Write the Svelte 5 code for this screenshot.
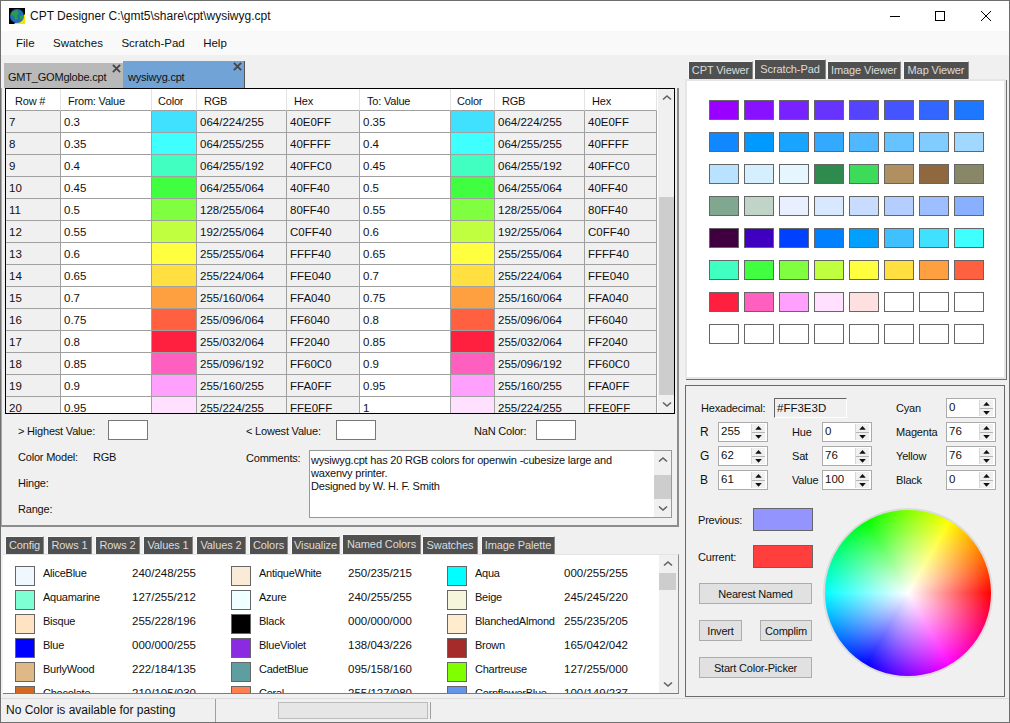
<script lang="ts">
  const rows = [
    [7, '0.3', '#40E0FF', '064/224/255', '40E0FF', '0.35'],
    [8, '0.35', '#40FFFF', '064/255/255', '40FFFF', '0.4'],
    [9, '0.4', '#40FFC0', '064/255/192', '40FFC0', '0.45'],
    [10, '0.45', '#40FF40', '064/255/064', '40FF40', '0.5'],
    [11, '0.5', '#80FF40', '128/255/064', '80FF40', '0.55'],
    [12, '0.55', '#C0FF40', '192/255/064', 'C0FF40', '0.6'],
    [13, '0.6', '#FFFF40', '255/255/064', 'FFFF40', '0.65'],
    [14, '0.65', '#FFE040', '255/224/064', 'FFE040', '0.7'],
    [15, '0.7', '#FFA040', '255/160/064', 'FFA040', '0.75'],
    [16, '0.75', '#FF6040', '255/096/064', 'FF6040', '0.8'],
    [17, '0.8', '#FF2040', '255/032/064', 'FF2040', '0.85'],
    [18, '0.85', '#FF60C0', '255/096/192', 'FF60C0', '0.9'],
    [19, '0.9', '#FFA0FF', '255/160/255', 'FFA0FF', '0.95'],
    [20, '0.95', '#FFE0FF', '255/224/255', 'FFE0FF', '1']
  ];

  const swatches = [
    '#9900FF', '#8811FF', '#7722FF', '#6633FF', '#5544FF', '#4455FF', '#3366FF', '#1E78FF',
    '#1188FF', '#0099FF', '#18A4FF', '#33AAFF', '#4FB8FF', '#66C3FF', '#80CCFF', '#A0D8FF',
    '#B8E2FF', '#D6EFFF', '#E6F6FF', '#2E8B4D', '#3CDC5A', '#B09060', '#906840', '#888868',
    '#80A890', '#C0D4C8', '#E8F0FF', '#D8E8FF', '#C8DCFF', '#B4CFFF', '#9EBFFF', '#88B0FF',
    '#400040', '#4000C0', '#0040FF', '#0080FF', '#00A0FF', '#40C0FF', '#40E0FF', '#40FFFF',
    '#40FFC0', '#40FF40', '#80FF40', '#C0FF40', '#FFFF40', '#FFE040', '#FFA040', '#FF6040',
    '#FF2040', '#FF60C0', '#FFA0FF', '#FFE0FF', '#FFE0E0', '#FFF', '#FFF', '#FFF',
    '#FFF', '#FFF', '#FFF', '#FFF', '#FFF', '#FFF', '#FFF', '#FFF'
  ];

  const named = [
    ['AliceBlue', '240/248/255', '#F0F8FF'], ['AntiqueWhite', '250/235/215', '#FAEBD7'], ['Aqua', '000/255/255', '#00FFFF'],
    ['Aquamarine', '127/255/212', '#7FFFD4'], ['Azure', '240/255/255', '#F0FFFF'], ['Beige', '245/245/220', '#F5F5DC'],
    ['Bisque', '255/228/196', '#FFE4C4'], ['Black', '000/000/000', '#000000'], ['BlanchedAlmond', '255/235/205', '#FFEBCD'],
    ['Blue', '000/000/255', '#0000FF'], ['BlueViolet', '138/043/226', '#8A2BE2'], ['Brown', '165/042/042', '#A52A2A'],
    ['BurlyWood', '222/184/135', '#DEB887'], ['CadetBlue', '095/158/160', '#5F9EA0'], ['Chartreuse', '127/255/000', '#7FFF00'],
    ['Chocolate', '210/105/030', '#D2691E'], ['Coral', '255/127/080', '#FF7F50'], ['CornflowerBlue', '100/149/237', '#6495ED']
  ];

  const lowerTabs = [
    ['Config', 39], ['Rows 1', 45], ['Rows 2', 45], ['Values 1', 50], ['Values 2', 50],
    ['Colors', 39], ['Visualize', 49], ['Named Colors', 79], ['Swatches', 56], ['Image Palette', 74]
  ];
  const viewerTabs = [['CPT Viewer', 65], ['Scratch-Pad', 72], ['Image Viewer', 74], ['Map Viewer', 66]];
</script>

{#snippet scrollbar(kind: string)}
  <div class="scrollbar {kind}">
    <svg class="chev" viewBox="0 0 10 6"><path d="M1 5 5 1.500 9 5" /></svg>
    <div class="track"><div class="thumb"></div></div>
    <svg class="chev" viewBox="0 0 10 6"><path d="M1 1 5 4.500 9 1" /></svg>
  </div>
{/snippet}

{#snippet spin(value: string)}
  <div class="spin">
    <span>{value}</span>
    <div class="spin-btns">
      <svg viewBox="0 0 13 8"><path d="M6.500 2 10 6H3z" /></svg>
      <svg viewBox="0 0 13 8"><path d="M6.500 6 10 2H3z" /></svg>
    </div>
  </div>
{/snippet}

{#snippet closeX()}
  <svg class="close-x" viewBox="0 0 10 10"><path d="M1 1 9 9M9 1 1 9" /></svg>
{/snippet}

<div class="window">
  <header class="titlebar">
    <svg class="app-icon" viewBox="0 0 16 16">
      <rect width="16" height="16" fill="#000" />
      <path d="M16 6V16H5z" fill="#f2e40c" />
      <circle cx="8" cy="8" r="7" fill="#1c6fb8" />
      <path d="M3 4 8 2l2 3-2 3 1 3-3 1-1-4-3-1zM11 8l3-1 0 3-3 2z" fill="#2f9a48" />
    </svg>
    <span class="title">CPT Designer C:\gmt5\share\cpt\wysiwyg.cpt</span>
    <div class="win-controls">
      <svg viewBox="0 0 10 10"><path d="M0 5.500H10" /></svg>
      <svg viewBox="0 0 10 10"><rect x=".5" y=".5" width="9" height="9" /></svg>
      <svg viewBox="0 0 10 10"><path d="M0 0 10 10M10 0 0 10" /></svg>
    </div>
  </header>

  <nav class="menubar">
    <span>File</span><span>Swatches</span><span>Scratch-Pad</span><span>Help</span>
  </nav>

  <main class="main">
    <section class="left">
      <div class="upper">
        <div class="doc-tabs">
          <div class="doc-tab inactive"><span>GMT_GOMglobe.cpt</span>{@render closeX()}</div>
          <div class="doc-tab active"><span>wysiwyg.cpt</span>{@render closeX()}</div>
        </div>

        <div class="upper-body">
          <div class="table-box">
            <div class="table">
              <div class="row head">
                <div>Row #</div><div>From: Value</div><div class="color-head">Color</div><div>RGB</div><div>Hex</div>
                <div>To: Value</div><div class="color-head">Color</div><div>RGB</div><div>Hex</div>
              </div>
              {#each rows as r}
                <div class="row">
                  <div class="grey">{r[0]}</div>
                  <div>{r[1]}</div>
                  <div style="background: {r[2]}"></div>
                  <div class="grey">{r[3]}</div>
                  <div class="grey">{r[4]}</div>
                  <div>{r[5]}</div>
                  <div style="background: {r[2]}"></div>
                  <div class="grey">{r[3]}</div>
                  <div class="grey">{r[4]}</div>
                </div>
              {/each}
            </div>
            {@render scrollbar('sb-table')}
          </div>

          <div class="limits">
            <span class="l-high">&gt; Highest Value:</span><div class="color-box"></div>
            <span class="l-low">&lt; Lowest Value:</span><div class="color-box"></div>
            <span class="l-nan">NaN Color:</span><div class="color-box"></div>
          </div>

          <div class="meta">
            <div class="meta-left">
              <div><span class="meta-label">Color Model:</span><span>RGB</span></div>
              <div>Hinge:</div>
              <div>Range:</div>
            </div>
            <span class="comments-label">Comments:</span>
            <div class="comments">
              <p>wysiwyg.cpt has 20 RGB colors for openwin -cubesize large and waxenvy printer.<br />Designed by W. H. F. Smith</p>
              {@render scrollbar('sb-comments')}
            </div>
          </div>
        </div>
      </div>

      <div class="lower">
        <div class="tabs lower-tabs">
          {#each lowerTabs as [t, w]}
            <div class="tab" class:selected={t === 'Named Colors'} style="width: {w}px">{t}</div>
          {/each}
        </div>
        <div class="named-box">
          <div class="named">
            {#each named as n}
              <div class="named-item">
                <div class="named-chip" style="background: {n[2]}"></div>
                <span class="named-name">{n[0]}</span>
                <span class="num">{n[1]}</span>
              </div>
            {/each}
          </div>
          {@render scrollbar('sb-named')}
        </div>
      </div>
    </section>

    <section class="right">
      <div class="tabs viewer-tabs">
        {#each viewerTabs as [t, w]}
          <div class="tab" class:selected={t === 'Scratch-Pad'} style="width: {w}px">{t}</div>
        {/each}
      </div>
      <div class="viewer">
        <div class="swatch-grid">
          {#each swatches as c}
            <div class="swatch" style="background: {c}"></div>
          {/each}
        </div>
      </div>

      <div class="picker">
        <div class="values">
          <div class="hex-row">
            <span>Hexadecimal:</span>
            <div class="hex-input">#FF3E3D</div>
          </div>
          <span>Cyan</span>{@render spin('0')}
          <span class="ch">R</span>{@render spin('255')}<i></i><span>Hue</span>{@render spin('0')}<i></i><span>Magenta</span>{@render spin('76')}
          <span class="ch">G</span>{@render spin('62')}<i></i><span>Sat</span>{@render spin('76')}<i></i><span>Yellow</span>{@render spin('76')}
          <span class="ch">B</span>{@render spin('61')}<i></i><span>Value</span>{@render spin('100')}<i></i><span>Black</span>{@render spin('0')}
        </div>

        <div class="picker-bottom">
          <div class="actions">
            <div class="compare"><span>Previous:</span><div class="chip previous"></div></div>
            <div class="compare current"><span>Current:</span><div class="chip now"></div></div>
            <button>Nearest Named</button>
            <div class="btn-pair"><button class="invert">Invert</button><button class="complim">Complim</button></div>
            <button>Start Color-Picker</button>
          </div>
          <div class="wheel"><div class="wheel-fade"></div></div>
        </div>
      </div>
    </section>
  </main>

  <footer class="statusbar">
    <span class="status-text">No Color is available for pasting</span>
    <div class="progress"></div>
  </footer>
</div>

<style>
  :global(body) {
    margin: 0;
    background: #f0f0f0;
  }

  .window {
    width: 1010px;
    height: 723px;
    box-sizing: border-box;
    border: 1px solid #6f6f6f;
    background: #f0f0f0;
    display: flex;
    flex-direction: column;
    overflow: hidden;
    font-family: "Liberation Sans", Arial, sans-serif;
    font-size: 11px;
    letter-spacing: -0.2px;
    color: #111;
  }

  .titlebar {
    height: 30px;
    flex: none;
    background: #fff;
    display: flex;
    align-items: center;
    padding-left: 8px;
    letter-spacing: 0;
  }

  .app-icon {
    width: 16px;
    height: 16px;
    margin-right: 5px;
  }

  .title {
    font-size: 12px;
  }

  .win-controls {
    margin-left: auto;
    margin-right: 18px;
    display: flex;
    gap: 36px;
  }

  .win-controls svg {
    width: 10px;
    height: 10px;
    fill: none;
    stroke: #000;
    stroke-width: 1;
    overflow: visible;
  }

  .win-controls svg:first-child {
    margin-right: -1px;
  }

  .menubar {
    height: 24px;
    flex: none;
    background: #f9f9f9;
    display: flex;
    align-items: center;
    gap: 18.500px;
    padding-left: 15px;
    font-size: 11.500px;
    letter-spacing: 0;
  }

  .main {
    flex: 1;
    display: flex;
    min-height: 0;
  }

  .left {
    width: 678px;
    flex: none;
    display: flex;
    flex-direction: column;
  }

  .upper {
    height: 472px;
    display: flex;
    flex-direction: column;
  }

  .doc-tabs {
    height: 33px;
    flex: none;
    box-sizing: border-box;
    display: flex;
    align-items: flex-end;
    padding-left: 3px;
  }

  .doc-tab {
    position: relative;
    box-sizing: border-box;
    display: flex;
    align-items: flex-end;
    padding: 0 0 5px 4px;
  }

  .doc-tab.inactive {
    width: 119px;
    height: 25px;
    background: #b9b9b9;
  }

  .doc-tab.active {
    width: 122px;
    height: 27px;
    background: #72a3d6;
    padding-left: 5px;
    border-right: 1px solid #555;
  }

  .close-x {
    position: absolute;
    top: 1px;
    right: 2px;
    width: 9px;
    height: 9px;
    fill: none;
    stroke: #444;
    stroke-width: 2;
  }

  .upper-body {
    flex: 1;
    box-sizing: border-box;
    border-bottom: 2px solid #8c8c8c;
    border-right: 2px solid #8c8c8c;
    border-left: 1px solid #a8a8a8;
  }

  .table-box {
    margin-left: 3px;
    width: 670px;
    height: 326px;
    box-sizing: border-box;
    border: 1px solid #000;
    background: #fff;
    display: flex;
    overflow: hidden;
  }

  .table {
    width: 651px;
    flex: none;
    font-size: 11.500px;
  }

  .row {
    display: grid;
    grid-template-columns: 55px 91px 45px 90px 73px 91px 44px 90px 72px;
    height: 22px;
    letter-spacing: 0;
  }

  .row > div {
    box-sizing: border-box;
    border-right: 1px solid #a0a0a0;
    border-bottom: 1px solid #a0a0a0;
    padding: 5px 0 0 3px;
    line-height: 13px;
    white-space: nowrap;
  }

  .row > div.grey {
    background: #f0f0f0;
  }

  .row.head {
    font-size: 11px;
    letter-spacing: -0.2px;
  }

  .row.head > div {
    padding: 6px 0 0 7px;
    border-right-color: #e3e3e3;
    border-bottom-color: #a0a0a0;
    background: #fff;
  }

  .row.head > div:first-child {
    padding-left: 9px;
  }

  .row.head > div.color-head {
    padding-left: 6px;
  }

  .scrollbar {
    background: #f0f0f0;
    display: flex;
    flex-direction: column;
    align-items: center;
    flex: none;
    box-sizing: border-box;
  }

  .chev {
    width: 10px;
    height: 17px;
    flex: none;
    fill: none;
    stroke: #606060;
    stroke-width: 1.600;
  }

  .track {
    flex: 1;
    width: 100%;
    min-height: 0;
  }

  .thumb {
    background: #cdcdcd;
  }

  .sb-table {
    width: 18px;
    border-left: 1px solid #fff;
  }

  .sb-table .thumb {
    margin-top: 91px;
    height: 198px;
    margin-left: 1px;
    margin-right: 1px;
  }

  .sb-comments {
    width: 17px;
  }

  .sb-comments .thumb {
    margin-top: 7px;
    height: 24px;
  }

  .sb-named {
    width: 17px;
    background: transparent;
  }

  .sb-named .thumb {
    height: 17px;
    margin-top: 1px;
  }

  .limits {
    display: flex;
    align-items: center;
    margin-top: 6px;
    height: 20px;
  }

  .limits span {
    padding-top: 1px;
  }

  .l-high { margin-left: 16px; width: 90px; }
  .l-low { margin-left: 98px; width: 90px; }
  .l-nan { margin-left: 98px; width: 62px; }

  .color-box {
    width: 40px;
    height: 20px;
    box-sizing: border-box;
    border: 1px solid #777;
    background: #fff;
  }

  .meta {
    display: flex;
    margin-top: 10px;
  }

  .meta-left {
    width: 228px;
    margin-left: 16px;
    display: flex;
    flex-direction: column;
    gap: 13px;
    padding-top: 1px;
  }

  .meta-left > div {
    height: 13px;
    line-height: 13px;
  }

  .meta-label {
    display: inline-block;
    width: 75px;
  }

  .comments-label {
    width: 63px;
    line-height: 13px;
    padding-top: 2px;
  }

  .comments {
    width: 363px;
    height: 68px;
    box-sizing: border-box;
    border: 1px solid #999;
    background: #fff;
    display: flex;
  }

  .comments p {
    flex: 1;
    margin: 3px 0 0 1px;
    line-height: 13px;
    color: #111;
  }

  .tabs {
    display: flex;
    align-items: flex-end;
  }

  .tab {
    box-sizing: border-box;
    height: 18px;
    line-height: 16px;
    text-align: center;
    background: #505050;
    color: #dcdcdc;
    border-top: 1px solid #f8f8f8;
    border-left: 1px solid #f8f8f8;
    border-right: 1px solid #8a8a8a;
    margin-right: 3px;
    white-space: nowrap;
    letter-spacing: -0.1px;
  }

  .tab.selected {
    height: 20px;
    line-height: 18px;
  }

  .lower {
    margin-top: 8px;
    margin-left: 2px;
    display: flex;
    flex-direction: column;
    width: 676px;
  }

  .lower-tabs {
    margin-left: 2px;
    height: 19px;
  }

  .lower-tabs .tab:nth-child(7) {
    margin-right: 2px;
  }

  .lower-tabs .tab.selected {
    margin-right: 1px;
  }

  .named-box {
    height: 140px;
    box-sizing: border-box;
    border-top: 1px solid #e4e4e4;
    border-bottom: 1px solid #7c7c7c;
    border-right: 1px solid #8c8c8c;
    display: flex;
    overflow: hidden;
  }

  .named {
    width: 656px;
    flex: none;
    display: grid;
    background: #fff;
    grid-template-columns: repeat(3, 216px);
    grid-auto-rows: 24px;
    padding: 11px 0 0 12px;
    box-sizing: border-box;
    align-content: start;
  }

  .named-item {
    display: flex;
    align-items: flex-start;
  }

  .named-chip {
    width: 20px;
    height: 20px;
    box-sizing: border-box;
    border: 1px solid #666;
    margin-right: 8px;
    flex: none;
  }

  .named-item span {
    line-height: 14px;
  }

  .named-name {
    width: 89px;
    flex: none;
    white-space: nowrap;
    letter-spacing: -0.25px;
  }

  .num {
    font-size: 11.500px;
    letter-spacing: 0;
  }

  .right {
    flex: 1;
    display: flex;
    flex-direction: column;
    padding-left: 6px;
  }

  .viewer-tabs {
    height: 24px;
    margin-left: 3px;
  }

  .viewer-tabs .tab {
    margin-right: 1px;
  }

  .viewer-tabs .tab:nth-child(3) {
    margin-right: 2px;
  }

  .viewer {
    width: 321px;
    height: 300px;
    box-sizing: border-box;
    background: #fff;
    border: 2px solid #e6e6e6;
    box-shadow: 1px 1px 0 #6f6f6f;
  }

  .swatch-grid {
    display: grid;
    grid-template-columns: repeat(8, 30px);
    grid-auto-rows: 20px;
    column-gap: 5px;
    row-gap: 12px;
    padding: 19px 0 0 22px;
  }

  .swatch {
    box-sizing: border-box;
    border: 1px solid #666;
  }

  .picker {
    width: 320px;
    height: 312px;
    margin-top: 6px;
    box-sizing: border-box;
    border: 1px solid #6a6a6a;
    padding: 12px 0 0 14px;
  }

  .values {
    display: grid;
    grid-template-columns: 18px 50px 24px 30px 50px 24px 50px 50px;
    grid-auto-rows: 20px;
    row-gap: 4px;
    align-items: center;
  }

  .values i {
    display: block;
  }

  .ch {
    font-size: 12px;
  }

  .hex-row {
    grid-column: 1 / 7;
    display: flex;
    align-items: center;
  }

  .hex-row span {
    width: 73px;
    margin-left: 1px;
  }

  .hex-input {
    width: 73px;
    height: 20px;
    box-sizing: border-box;
    border: 1px solid #fff;
    border-top-color: #666;
    border-left-color: #666;
    padding: 3px 0 0 2px;
    line-height: 13px;
    font-size: 11.500px;
    letter-spacing: 0;
  }

  .spin {
    height: 20px;
    box-sizing: border-box;
    border: 1px solid #aaa;
    background: #fff;
    display: flex;
    justify-content: space-between;
    line-height: 13px;
    padding: 1px 2px 1px 1px;
    font-size: 11.500px;
    letter-spacing: 0;
  }

  .spin > span {
    padding: 1px 0 0 1px;
  }

  .spin-btns {
    width: 13px;
    display: flex;
    flex-direction: column;
    gap: 1px;
    background: #b4b4b4;
    border-left: 1px solid #d8d8d8;
  }

  .spin-btns svg {
    display: block;
    width: 13px;
    height: 8px;
    background: #f0f0f0;
    fill: #111;
  }

  .picker-bottom {
    display: flex;
    margin-top: 18px;
  }

  .actions {
    width: 124px;
    margin-left: -1px;
    display: flex;
    flex-direction: column;
    flex: none;
  }

  .compare {
    display: flex;
    align-items: center;
    width: 115px;
    height: 23px;
    margin-left: -1px;
    margin-bottom: 14px;
    justify-content: space-between;
  }

  .current {
    margin-bottom: 15px;
  }

  .chip {
    width: 60px;
    height: 23px;
    box-sizing: border-box;
    border: 1px solid #666;
  }

  .previous { background: #9494ff; }
  .now { background: #ff3e3d; }

  button {
    display: block;
    box-sizing: border-box;
    width: 113px;
    height: 21px;
    margin: 0 0 16px;
    padding: 0;
    background: #e1e1e1;
    border: 1px solid #adadad;
    font: inherit;
    letter-spacing: inherit;
    color: #111;
  }

  .btn-pair {
    display: flex;
    width: 113px;
    justify-content: space-between;
  }

  .btn-pair button.invert { width: 43px; }
  .btn-pair button.complim { width: 52px; }

  .wheel {
    width: 170px;
    height: 170px;
    box-sizing: border-box;
    border-radius: 50%;
    border: 2px solid #dcdcdc;
    background: conic-gradient(from 90deg, #f00, #f0f, #00f, #0ff, #0f0, #ff0, #f00);
  }

  .wheel-fade {
    width: 100%;
    height: 100%;
    border-radius: 50%;
    background: radial-gradient(circle closest-side, #fff, rgba(255, 255, 255, 0));
  }

  .statusbar {
    height: 24px;
    flex: none;
    box-sizing: border-box;
    border-top: 1px solid #dcdcdc;
    display: flex;
    align-items: center;
    font-size: 12px;
    letter-spacing: 0;
  }

  .status-text {
    width: 209px;
    padding-left: 5px;
    height: 100%;
    line-height: 22px;
    border-right: 1px solid #a0a0a0;
    flex: none;
  }

  .progress {
    width: 150px;
    height: 17px;
    margin-left: 62px;
    box-sizing: border-box;
    background: #e6e6e6;
    border: 1px solid #bcbcbc;
    box-shadow: 2px 0 0 #f0f0f0, 3px 0 0 #a0a0a0;
  }
</style>
